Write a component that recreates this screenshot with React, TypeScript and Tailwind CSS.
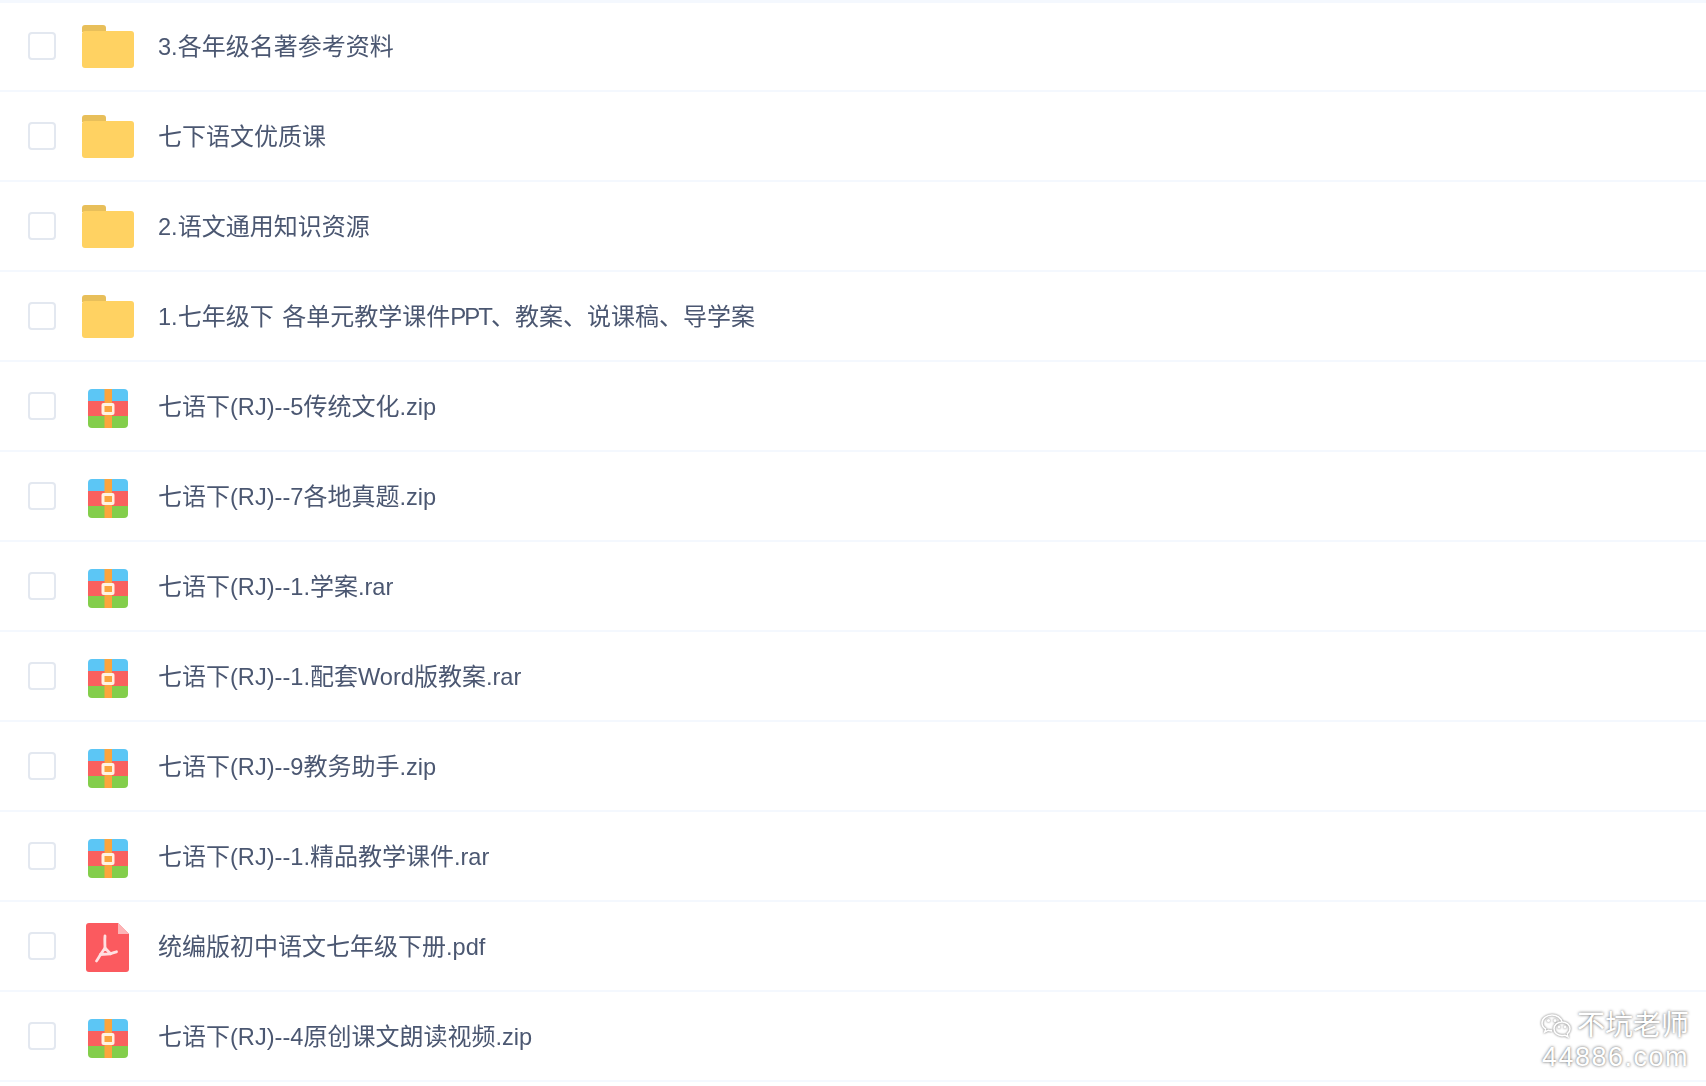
type Kind = "folder" | "zip" | "pdf";

const files: { name: string; kind: Kind }[] = [
  { name: "3.各年级名著参考资料", kind: "folder" },
  { name: "七下语文优质课", kind: "folder" },
  { name: "2.语文通用知识资源", kind: "folder" },
  { name: "1.七年级下 各单元教学课件PPT、教案、说课稿、导学案", kind: "folder" },
  { name: "七语下(RJ)--5传统文化.zip", kind: "zip" },
  { name: "七语下(RJ)--7各地真题.zip", kind: "zip" },
  { name: "七语下(RJ)--1.学案.rar", kind: "zip" },
  { name: "七语下(RJ)--1.配套Word版教案.rar", kind: "zip" },
  { name: "七语下(RJ)--9教务助手.zip", kind: "zip" },
  { name: "七语下(RJ)--1.精品教学课件.rar", kind: "zip" },
  { name: "统编版初中语文七年级下册.pdf", kind: "pdf" },
  { name: "七语下(RJ)--4原创课文朗读视频.zip", kind: "zip" },
];

function FolderIcon() {
  return (
    <svg width="52" height="43" viewBox="0 0 52 43" className="mt-[1px] blur-[0.4px]">
      <path d="M0 3a3 3 0 0 1 3-3h18a3 3 0 0 1 3 3v4H0z" fill="#e8bf5a" />
      <path d="M0 9a3 3 0 0 1 3-3h46a3 3 0 0 1 3 3v31a3 3 0 0 1-3 3H3a3 3 0 0 1-3-3z" fill="#ffd262" />
    </svg>
  );
}

function ZipIcon() {
  return (
    <svg width="40" height="39" viewBox="0 0 40 39" className="mt-[5px] blur-[0.4px]">
      <path d="M0 12V4a4 4 0 0 1 4-4h32a4 4 0 0 1 4 4v8z" fill="#5cc6f5" />
      <rect y="12" width="40" height="15" fill="#f9605f" />
      <path d="M0 27h40v8a4 4 0 0 1-4 4H4a4 4 0 0 1-4-4z" fill="#83ce4b" />
      <rect x="16.500" width="7.500" height="39" fill="#fba53d" />
      <rect x="13.500" y="14" width="13" height="12" rx="2" fill="#fff2e2" />
      <rect x="16.500" y="17" width="7.500" height="6" fill="#fba53d" />
    </svg>
  );
}

function PdfIcon() {
  return (
    <svg width="43" height="49" viewBox="0 0 43 49" className="mt-[3px] mr-[1px] blur-[0.4px]">
      <path d="M3 0h29l11 11v35a3 3 0 0 1-3 3H3a3 3 0 0 1-3-3V3a3 3 0 0 1 3-3z" fill="#fb5a5f" />
      <path d="M32 0l11 11h-11z" fill="#fdb4b6" />
      <g fill="none" stroke="#ffe0e1" strokeWidth="2.800" strokeLinecap="round" strokeLinejoin="round">
        <path d="M19 13c-.5 4 0 8 0 12" />
        <path d="M19 25l-4.500 6.500 10-.7z" />
        <path d="M14.500 31.500c-1.500 2.500-2.500 4.500-4 6.500" />
        <path d="M24.500 30.800c2-.8 4-1.500 6-2" />
      </g>
    </svg>
  );
}

function FileIcon({ kind }: { kind: Kind }) {
  if (kind === "folder") return <FolderIcon />;
  if (kind === "zip") return <ZipIcon />;
  return <PdfIcon />;
}

function WeChat() {
  return (
    <svg width="30" height="25" viewBox="0 0 30 25" fill="none" stroke="#fff" strokeWidth="1.600" className="drop-shadow-[0_0_1px_#666]">
      <path d="M21 8C20 4 16 1 11 1 5.500 1 1 4.600 1 9c0 2.500 1.400 4.600 3.600 6l-.8 3 3.300-1.700c1.200.4 2.500.6 3.900.6" />
      <path d="M21 8c4.400 0 8 3 8 6.800 0 2-1 3.800-2.700 5l.6 3-3-1.600c-1 .3-1.900.4-2.900.4-4.400 0-8-3-8-6.800S16.600 8 21 8z" />
      <circle cx="7.500" cy="6.500" r=".8" />
      <circle cx="14" cy="6.500" r=".8" />
      <circle cx="18" cy="13" r=".6" />
      <circle cx="24" cy="13" r=".6" />
    </svg>
  );
}

// latin runs are a bit narrower than the cjk in the source font
function FileName({ name }: { name: string }) {
  return (
    <>
      {name.split(/([\x20-\x7e]+)/).map((part, i) =>
        i % 2 ? (
          <span key={i} className={part === "PPT" ? "tracking-[-2px]" : "text-[23.6px]"}>
            {part}
          </span>
        ) : (
          part
        ),
      )}
    </>
  );
}

export default function App() {
  return (
    <div className="relative h-[1086px] w-full overflow-hidden bg-white font-['Liberation_Sans','Noto_Sans_CJK_SC',sans-serif]">
      <div className="h-[3px] bg-[#f4f8fe]" />
      <div>
        {files.map((f) => (
          <div key={f.name} className="flex h-[90px] items-center border-b-2 border-[#f4f8fe] first:h-[89px] first:pb-px">
            <div className="ml-[28px] h-[28px] w-[28px] rounded-[4px] border-2 border-[#e3e8f0] blur-[0.3px]" />
            <div className="ml-[26px] flex w-[52px] justify-center">
              <FileIcon kind={f.kind} />
            </div>
            <div className="mt-[2px] ml-[24px] text-[24px] text-[#4b5771] blur-[0.3px] [word-spacing:2px]">
              <FileName name={f.name} />
            </div>
          </div>
        ))}
      </div>
      <div className="absolute right-[17px] bottom-[14px] flex flex-col items-end text-white [text-shadow:0_0_3px_#555]">
        <div className="flex items-center gap-[6px] text-[28px] leading-[32px]">
          <WeChat />
          <span>不坑老师</span>
        </div>
        <div className="text-[27px] leading-[30px] tracking-[1.500px]">44886.com</div>
      </div>
    </div>
  );
}
